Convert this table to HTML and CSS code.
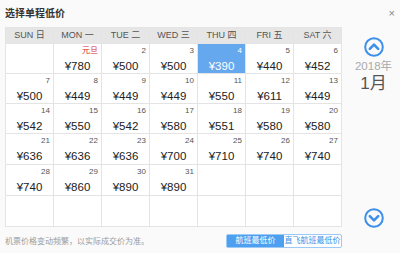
FILE: index.html
```html
<!DOCTYPE html>
<html>
<head>
<meta charset="utf-8">
<link rel="stylesheet" href="styles.css">
</head>
<body>
<div class="popup">
  <div class="main">
    <div class="title">选择单程低价</div>
    <div class="cal">
      <div class="hd">SUN 日</div><div class="hd">MON 一</div><div class="hd">TUE 二</div><div class="hd">WED 三</div><div class="hd">THU 四</div><div class="hd">FRI 五</div><div class="hd">SAT 六</div>
      <div class="cell"></div>
      <div class="cell"><span class="d hol">元旦</span><span class="p">¥780</span></div>
      <div class="cell"><span class="d">2</span><span class="p">¥500</span></div>
      <div class="cell"><span class="d">3</span><span class="p">¥500</span></div>
      <div class="cell sel"><span class="d">4</span><span class="p">¥390</span></div>
      <div class="cell"><span class="d">5</span><span class="p">¥440</span></div>
      <div class="cell"><span class="d">6</span><span class="p">¥452</span></div>
      <div class="cell"><span class="d">7</span><span class="p">¥500</span></div>
      <div class="cell"><span class="d">8</span><span class="p">¥449</span></div>
      <div class="cell"><span class="d">9</span><span class="p">¥449</span></div>
      <div class="cell"><span class="d">10</span><span class="p">¥449</span></div>
      <div class="cell"><span class="d">11</span><span class="p">¥550</span></div>
      <div class="cell"><span class="d">12</span><span class="p">¥611</span></div>
      <div class="cell"><span class="d">13</span><span class="p">¥449</span></div>
      <div class="cell"><span class="d">14</span><span class="p">¥542</span></div>
      <div class="cell"><span class="d">15</span><span class="p">¥550</span></div>
      <div class="cell"><span class="d">16</span><span class="p">¥542</span></div>
      <div class="cell"><span class="d">17</span><span class="p">¥580</span></div>
      <div class="cell"><span class="d">18</span><span class="p">¥551</span></div>
      <div class="cell"><span class="d">19</span><span class="p">¥580</span></div>
      <div class="cell"><span class="d">20</span><span class="p">¥580</span></div>
      <div class="cell"><span class="d">21</span><span class="p">¥636</span></div>
      <div class="cell"><span class="d">22</span><span class="p">¥636</span></div>
      <div class="cell"><span class="d">23</span><span class="p">¥636</span></div>
      <div class="cell"><span class="d">24</span><span class="p">¥700</span></div>
      <div class="cell"><span class="d">25</span><span class="p">¥710</span></div>
      <div class="cell"><span class="d">26</span><span class="p">¥740</span></div>
      <div class="cell"><span class="d">27</span><span class="p">¥740</span></div>
      <div class="cell"><span class="d">28</span><span class="p">¥740</span></div>
      <div class="cell"><span class="d">29</span><span class="p">¥860</span></div>
      <div class="cell"><span class="d">30</span><span class="p">¥890</span></div>
      <div class="cell"><span class="d">31</span><span class="p">¥890</span></div>
      <div class="cell"></div><div class="cell"></div><div class="cell"></div>
      <div class="cell"></div><div class="cell"></div><div class="cell"></div><div class="cell"></div>
      <div class="cell"></div><div class="cell"></div><div class="cell"></div>
    </div>
    <div class="foot">
      <span class="note">机票价格变动频繁，以实际成交价为准。</span>
      <div class="toggle"><span class="tb on">航班最低价</span><span class="tb">直飞航班最低价</span></div>
    </div>
  </div>
  <div class="side">
    <svg class="arrow up" width="20" height="20" viewBox="0 0 20 20"><circle cx="10" cy="10" r="8.8" fill="none" stroke="#3d8fe8" stroke-width="2"/><path d="M5.8 11.8 L10 7.6 L14.2 11.8" fill="none" stroke="#3d8fe8" stroke-width="2.6" stroke-linecap="round" stroke-linejoin="round"/></svg>
    <div class="year">2018年</div>
    <div class="month">1月</div>
    <div class="spacer"></div>
    <svg class="arrow down" width="20" height="20" viewBox="0 0 20 20"><circle cx="10" cy="10" r="8.8" fill="none" stroke="#3d8fe8" stroke-width="2"/><path d="M5.8 8.2 L10 12.4 L14.2 8.2" fill="none" stroke="#3d8fe8" stroke-width="2.6" stroke-linecap="round" stroke-linejoin="round"/></svg>
  </div>
  <span class="close">×</span>
</div>
</body>
</html>
```

FILE: styles.css
```css
html, body {
  margin: 0;
  padding: 0;
  background: #fafafa;
}
body {
  font-family: "Liberation Sans", "Noto Sans CJK SC", sans-serif;
  color: #333;
}
.popup {
  position: relative;
  width: 400px;
  height: 253px;
  display: flex;
  overflow: hidden;
}
.main {
  padding-left: 5px;
  display: flex;
  flex-direction: column;
}
.title {
  height: 29px;
  line-height: 27px;
  font-size: 10px;
  color: #333;
  font-weight: bold;
}
.cal {
  display: grid;
  grid-template-columns: repeat(7, 47px);
  grid-template-rows: 15px repeat(3, 29px) repeat(3, 30px);
  gap: 1px;
  background: #e4e4e4;
  border: 1px solid #e4e4e4;
  width: 335px;
}
.hd {
  background: #e6e6e6;
  font-size: 9px;
  color: #555;
  text-align: center;
  line-height: 15px;
}
.cell {
  background: #fff;
  position: relative;
  display: flex;
  flex-direction: column;
  align-items: center;
}
.d {
  align-self: flex-end;
  font-size: 8px;
  color: #555;
  padding: 2px 3px 0 0;
  line-height: 9px;
  height: 9px;
}
.hol {
  color: #d62c2c;
}
.p {
  font-size: 11.5px;
  line-height: 14px;
  margin-top: 4px;
  color: #222;
}
.sel {
  background: #66a8ee;
}
.sel .d, .sel .p {
  color: #fff;
}
.foot {
  display: flex;
  align-items: center;
  justify-content: space-between;
  height: 27px;
  width: 337px;
}
.note {
  font-size: 8px;
  color: #9a9a9a;
  padding-top: 1px;
  white-space: nowrap;
}
.toggle {
  display: flex;
  border: 1px solid #9cc9f5;
  border-radius: 2px;
  height: 12px;
  background: #fff;
  margin-top: 1px;
}
.tb {
  font-size: 8px;
  line-height: 12px;
  color: #3d8fe8;
  width: 57px;
  text-align: center;
  white-space: nowrap;
}
.tb.on {
  background: #4d9ff0;
  color: #fff;
}
.side {
  flex: 1;
  display: flex;
  flex-direction: column;
  align-items: center;
  padding-top: 37px;
  padding-left: 5px;
}
.arrow {
  display: block;
}
.year {
  font-size: 11.5px;
  color: #aaa;
  margin-top: 2px;
  line-height: 14px;
}
.month {
  font-size: 17px;
  color: #555;
  line-height: 20px;
  margin-top: 1px;
}
.spacer {
  flex: 1;
}
.down {
  margin-bottom: 25px;
}
.close {
  position: absolute;
  right: 5px;
  top: 8px;
  font-size: 11px;
  color: #888;
  line-height: 11px;
}
```
